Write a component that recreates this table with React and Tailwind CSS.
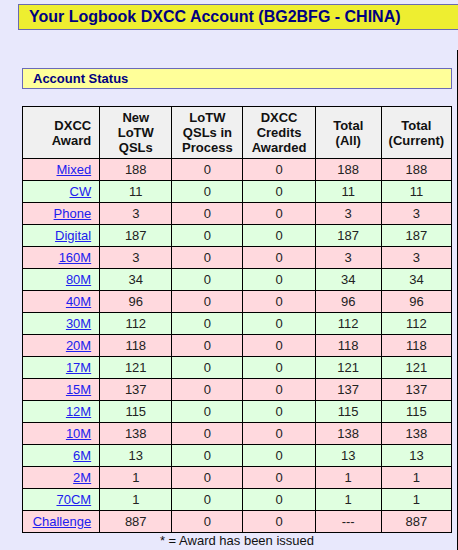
const rows = [
  ['Mixed', '188', '0', '0', '188', '188'],
  ['CW', '11', '0', '0', '11', '11'],
  ['Phone', '3', '0', '0', '3', '3'],
  ['Digital', '187', '0', '0', '187', '187'],
  ['160M', '3', '0', '0', '3', '3'],
  ['80M', '34', '0', '0', '34', '34'],
  ['40M', '96', '0', '0', '96', '96'],
  ['30M', '112', '0', '0', '112', '112'],
  ['20M', '118', '0', '0', '118', '118'],
  ['17M', '121', '0', '0', '121', '121'],
  ['15M', '137', '0', '0', '137', '137'],
  ['12M', '115', '0', '0', '115', '115'],
  ['10M', '138', '0', '0', '138', '138'],
  ['6M', '13', '0', '0', '13', '13'],
  ['2M', '1', '0', '0', '1', '1'],
  ['70CM', '1', '0', '0', '1', '1'],
  ['Challenge', '887', '0', '0', '---', '887'],
];

const headers = [
  ['DXCC', 'Award'],
  ['New', 'LoTW', 'QSLs'],
  ['LoTW', 'QSLs in', 'Process'],
  ['DXCC', 'Credits', 'Awarded'],
  ['Total', '(All)'],
  ['Total', '(Current)'],
];

const widths = ['w-[77px]', 'w-[72px]', 'w-[71px]', 'w-[72px]', 'w-[66px]', 'w-[70px]'];

export default function App() {
  return (
    <div className="h-[550px] w-[458px] overflow-hidden bg-[#e8e8fc] font-['Liberation_Sans',Arial,sans-serif]">
      {/* Page title */}
      <div className="ml-[18px] mt-[4px] h-[26px] w-[460px] border border-[#6a6ab0] bg-[#eeee30] pl-[10px] text-[16px] font-bold leading-[24px] text-[#000080]">
        Your Logbook DXCC Account (BG2BFG - CHINA)
      </div>

      <div className="flex">
        <div className="w-[457px]">
          {/* Section header */}
          <div className="ml-[22px] mt-[38px] h-[21px] w-[430px] border border-[#6a6ab8] bg-[#ffff99] pl-[10px] text-[13px] font-bold leading-[19px] text-[#000080]">
            Account Status
          </div>

          {/* Status table */}
          <table className="ml-[22px] mt-[17px] w-[430px] table-fixed border-collapse text-[13px] text-[#222]">
            <thead>
              <tr className="h-[52px] bg-[#f0f0f0]">
                {headers.map((lines, i) => (
                  <th
                    key={i}
                    className={`${widths[i]} border border-black p-0 font-bold leading-[15px] text-[#111] ${i === 0 ? 'pr-[8px] text-right' : 'text-center'}`}
                  >
                    {lines.map((l) => (
                      <div key={l}>{l}</div>
                    ))}
                  </th>
                ))}
              </tr>
            </thead>
            <tbody>
              {rows.map((r, i) => (
                <tr key={r[0]} className={`h-[22px] ${i % 2 === 0 ? 'bg-[#ffd9de]' : 'bg-[#e0ffe0]'}`}>
                  <td className="border border-black p-0 pr-[8px] text-right">
                    <a href="#" className="text-[#2020ee] underline">{r[0]}</a>
                  </td>
                  {r.slice(1).map((v, j) => (
                    <td key={j} className="border border-black p-0 text-center">{v}</td>
                  ))}
                </tr>
              ))}
            </tbody>
          </table>

          <div className="ml-[22px] w-[430px] text-center text-[13px] leading-[16px] text-[#111]">
            * = Award has been issued
          </div>
        </div>
        <div className="mt-[20px] h-[500px] w-px bg-black" />
      </div>
    </div>
  );
}
